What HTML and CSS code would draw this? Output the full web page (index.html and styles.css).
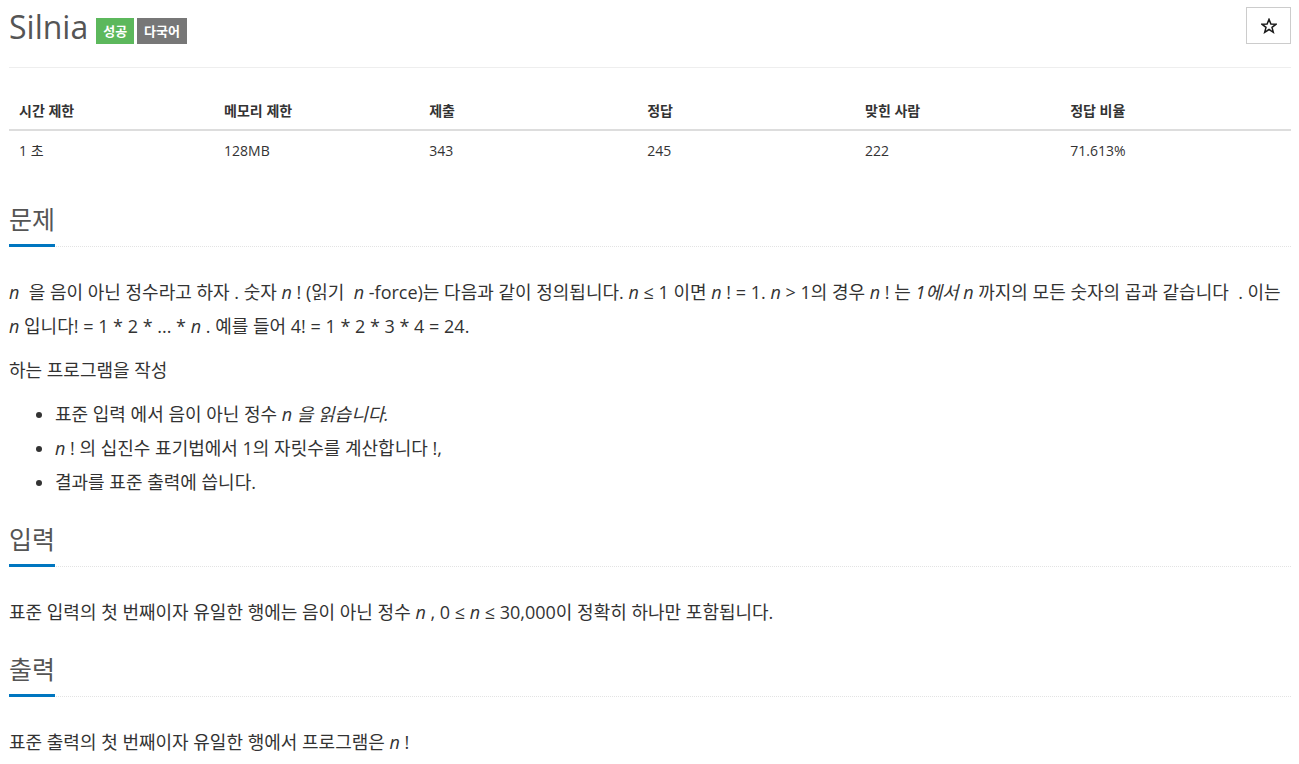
FILE: index.html
```html
<!DOCTYPE html>
<html lang="ko">
<head>
<meta charset="utf-8">
<title>Silnia</title>
<link rel="stylesheet" href="styles.css">
</head>
<body>
<div class="container">
  <div class="title-row">
    <h1 class="title">Silnia <span class="label label-success">성공</span><span class="label label-default">다국어</span></h1>
    <button class="star-btn" type="button" aria-label="즐겨찾기">
      <svg class="star-icon" width="16" height="16" viewBox="0 0 16 16" aria-hidden="true">
        <polygon points="8,1.4 9.9,6.1 14.9,6.3 11,9.4 12.3,14.3 8,11.5 3.7,14.3 5,9.4 1.1,6.3 6.1,6.1" fill="none" stroke="#1a1a1a" stroke-width="1.5" stroke-linejoin="miter"/>
      </svg>
    </button>
  </div>
  <hr class="title-hr">
  <table class="info-table">
    <thead>
      <tr>
        <th class="w16">시간 제한</th>
        <th class="w16">메모리 제한</th>
        <th class="w17">제출</th>
        <th class="w17">정답</th>
        <th class="w16">맞힌 사람</th>
        <th class="w18">정답 비율</th>
      </tr>
    </thead>
    <tbody>
      <tr>
        <td>1 초</td>
        <td>128MB</td>
        <td>343</td>
        <td>245</td>
        <td>222</td>
        <td>71.613%</td>
      </tr>
    </tbody>
  </table>

  <section class="section">
    <div class="headline"><h2>문제</h2></div>
    <div class="problem-text">
      <p><i>n</i> &nbsp;을 음이 아닌 정수라고 하자 . 숫자 <i>n</i> ! (읽기 &nbsp;<i>n</i> -force)는 다음과 같이 정의됩니다. <i>n</i> ≤ 1 이면 <i>n</i> ! = 1. <i>n</i> &gt; 1의 경우 <i>n</i> ! 는 <i>1에서 n</i> 까지의 모든 숫자의 곱과 같습니다 &nbsp;. 이는 <i>n</i> 입니다! = 1 * 2 * ... * <i>n</i> . 예를 들어 4! = 1 * 2 * 3 * 4 = 24.</p>
      <p>하는 프로그램을 작성</p>
      <ul>
        <li>표준 입력 에서 음이 아닌 정수 <i>n 을 읽습니다.</i></li>
        <li><i>n</i> ! 의 십진수 표기법에서 1의 자릿수를 계산합니다 !,</li>
        <li>결과를 표준 출력에 씁니다.</li>
      </ul>
    </div>
  </section>

  <section class="section">
    <div class="headline"><h2>입력</h2></div>
    <div class="problem-text">
      <p>표준 입력의 첫 번째이자 유일한 행에는 음이 아닌 정수 <i>n</i> , 0 ≤ <i>n</i> ≤ 30,000이 정확히 하나만 포함됩니다.</p>
    </div>
  </section>

  <section class="section">
    <div class="headline"><h2>출력</h2></div>
    <div class="problem-text">
      <p>표준 출력의 첫 번째이자 유일한 행에서 프로그램은 <i>n</i> !</p>
    </div>
  </section>
</div>
</body>
</html>
```

FILE: styles.css
```css
* { box-sizing: border-box; }

html, body {
  margin: 0;
  padding: 0;
  background: #fff;
}

body {
  font-family: "Open Sans", "Noto Sans CJK KR", sans-serif;
  font-size: 14px;
  line-height: 1.42857;
  color: #333;
}

.container {
  padding: 0 8px 0 9px;
}

.title-row {
  display: flex;
  justify-content: space-between;
  align-items: flex-start;
  padding-top: 6px;
}

.title {
  margin: 0;
  font-size: 32px;
  font-weight: 400;
  color: #555;
  line-height: 42px;
  display: flex;
  align-items: center;
}

.label {
  display: inline-block;
  font-size: 13px;
  font-weight: 700;
  color: #fff;
  line-height: 26px;
  height: 26px;
  padding: 0 7px;
  margin-top: 7px;
}

.label-success {
  background: #5cb85c;
  margin-left: 8px;
}

.label-default {
  background: #777;
  margin-left: 3px;
}

.star-btn {
  width: 45px;
  height: 37px;
  border: 1px solid #ccc;
  background: #fff;
  padding: 0;
  margin-top: 1px;
  display: flex;
  align-items: center;
  justify-content: center;
}

.star-icon {
  display: block;
}

.title-hr {
  border: 0;
  border-top: 1px solid #eee;
  margin: 19px 0 25px 0;
}

.info-table {
  width: 100%;
  border-collapse: collapse;
  margin-bottom: 32px;
}

.info-table th,
.info-table td {
  text-align: left;
  padding: 8px 10px;
  line-height: 20px;
}

.info-table td {
  padding: 10px 10px 9px 10px;
}

.info-table th {
  font-weight: 700;
  border-bottom: 2px solid #ddd;
}

.w16 { width: 16%; }
.w17 { width: 17%; }
.w18 { width: 18%; }

.section + .section {
  margin-top: 23px;
}

.headline {
  border-bottom: 1px dotted #e3e3e3;
  margin-bottom: 28px;
}

.headline h2 {
  display: inline-block;
  margin: 0 0 -1px 0;
  font-size: 25px;
  font-weight: 400;
  color: #555;
  line-height: 34px;
  padding-bottom: 8px;
  border-bottom: 3px solid #0076c0;
}

.problem-text {
  font-size: 18px;
  line-height: 34px;
  color: #333;
}

.problem-text p {
  margin: 0 0 10px 0;
}

.problem-text ul {
  margin: 0 0 10px 0;
  padding-left: 46px;
}

.problem-text i {
  font-style: italic;
}
```
